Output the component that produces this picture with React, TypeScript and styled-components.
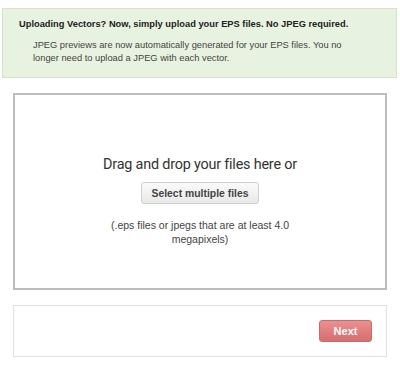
import React from 'react';
import styled, { createGlobalStyle } from 'styled-components';

const GlobalStyle = createGlobalStyle`
  html, body {
    margin: 0;
    padding: 0;
    background: #fff;
  }
  body {
    font-family: 'Liberation Sans', Arial, sans-serif;
    color: #333;
  }
`;

const Page = styled.div`
  display: flex;
  flex-direction: column;
  width: 400px;
  height: 366px;
  box-sizing: border-box;
  padding: 8px 0 0;
`;

const Alert = styled.div`
  margin: 0 3px 0 2px;
  height: 70px;
  box-sizing: border-box;
  background: #e8f2e0;
  border: 1px solid #d3e6c4;
  padding: 9px 0 0 16px;
`;

const AlertTitle = styled.div`
  font-size: 9.3px;
  font-weight: bold;
  color: #222;
  line-height: 12px;
`;

const AlertBody = styled.p`
  margin: 9px 0 0 14px;
  font-size: 9.3px;
  line-height: 13px;
  color: #444;
  width: 310px;
`;

const Panel = styled.div<{ $height: number; $strong?: boolean }>`
  margin: 15px 13px 0;
  height: ${(p) => p.$height}px;
  box-sizing: border-box;
  border: ${(p) => (p.$strong ? '2px solid #bdbdbd' : '1px solid #e0e0e0')};
`;

const DropZone = styled(Panel)`
  display: flex;
  flex-direction: column;
  align-items: center;
  padding-top: 60px;
`;

const DropTitle = styled.div`
  font-family: 'Roboto', 'Liberation Sans', sans-serif;
  font-size: 14.4px;
  letter-spacing: -0.2px;
  line-height: 20px;
  color: #333;
`;

const SelectButton = styled.button`
  margin-top: 7px;
  width: 118px;
  height: 22px;
  border: 1px solid #cfcfcf;
  border-radius: 3px;
  background: linear-gradient(#fafafa, #e9e9e9);
  font-family: 'Liberation Sans', Arial, sans-serif;
  font-size: 10.4px;
  font-weight: bold;
  color: #444;
  padding: 0;
`;

const Hint = styled.p`
  margin: 14px 0 0;
  width: 190px;
  text-align: center;
  font-size: 10.5px;
  line-height: 14px;
  color: #444;
`;

const Footer = styled(Panel)`
  display: flex;
  justify-content: flex-end;
  align-items: flex-start;
  padding: 14px 14px 0 0;
`;

const NextButton = styled.button`
  width: 53px;
  height: 22px;
  border: 1px solid #cf6868;
  border-radius: 3px;
  background: linear-gradient(#ec9090, #d86d6d);
  color: #fff;
  font-family: 'Liberation Sans', Arial, sans-serif;
  font-size: 11px;
  font-weight: bold;
  padding: 0;
`;

export default function App() {
  return (
    <>
      <GlobalStyle />
      <Page>
        <Alert>
          <AlertTitle>
            Uploading Vectors? Now, simply upload your EPS files. No JPEG required.
          </AlertTitle>
          <AlertBody>
            JPEG previews are now automatically generated for your EPS files. You no longer need to
            upload a JPEG with each vector.
          </AlertBody>
        </Alert>
        <DropZone $height={197} $strong>
          <DropTitle>Drag and drop your files here or</DropTitle>
          <SelectButton type="button">Select multiple files</SelectButton>
          <Hint>(.eps files or jpegs that are at least 4.0 megapixels)</Hint>
        </DropZone>
        <Footer $height={52}>
          <NextButton type="button">Next</NextButton>
        </Footer>
      </Page>
    </>
  );
}
